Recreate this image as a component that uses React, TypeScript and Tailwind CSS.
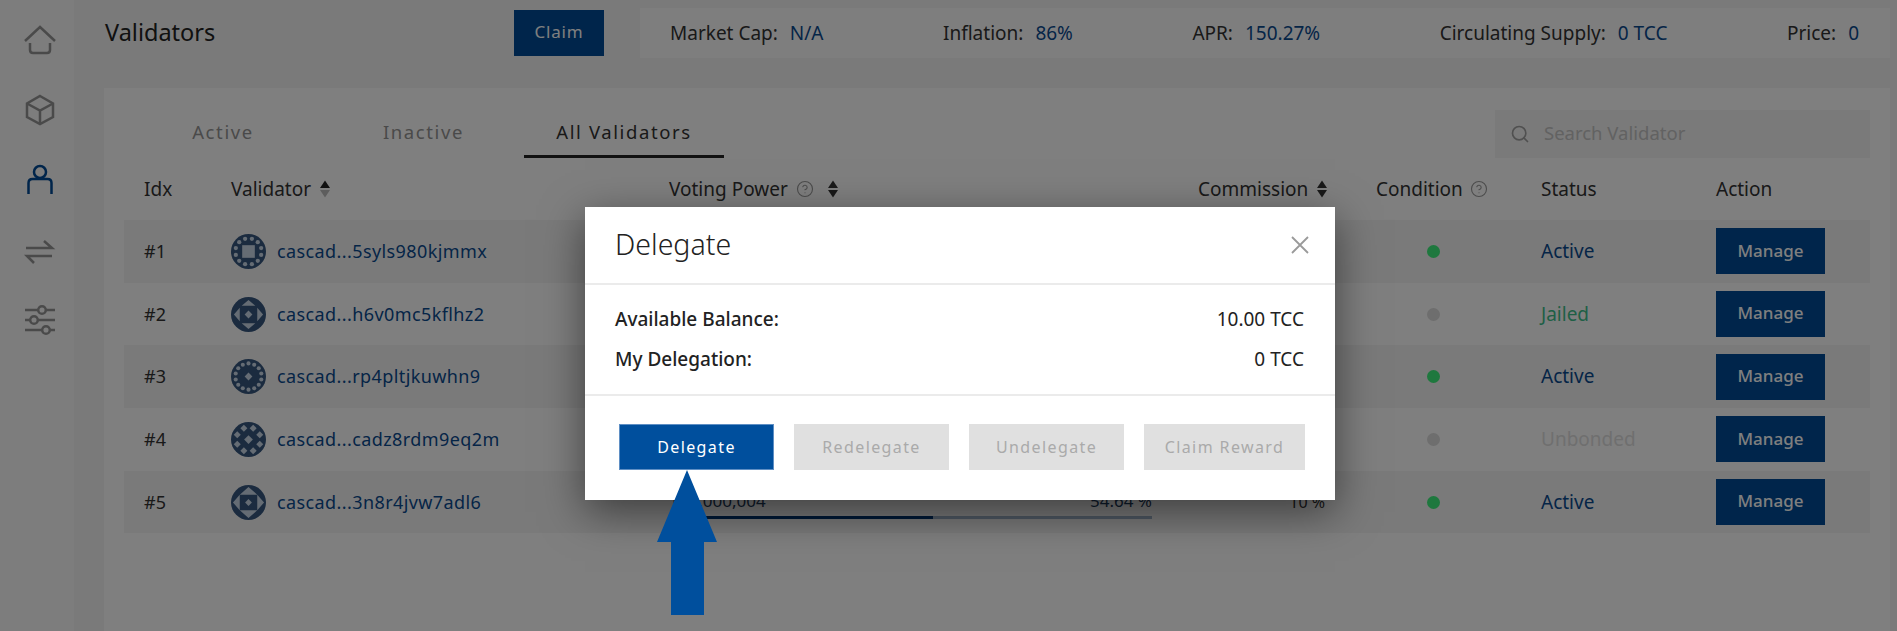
import React from "react";
import { CircleHelp, Search } from "lucide-react";

const FONT = "font-['Noto_Sans','Open_Sans',sans-serif]";

// only row 5's voting numbers peek out from under the modal
const validators = [
  { idx: "#1", name: "cascad...5syls980kjmmx", votes: "", pct: "", pctWidth: "w-[0%]", fee: "", online: true, status: "Active", avatar: 1 },
  { idx: "#2", name: "cascad...h6v0mc5kflhz2", votes: "", pct: "", pctWidth: "w-[0%]", fee: "", online: false, status: "Jailed", avatar: 2 },
  { idx: "#3", name: "cascad...rp4pltjkuwhn9", votes: "", pct: "", pctWidth: "w-[0%]", fee: "", online: true, status: "Active", avatar: 3 },
  { idx: "#4", name: "cascad...cadz8rdm9eq2m", votes: "", pct: "", pctWidth: "w-[0%]", fee: "", online: false, status: "Unbonded", avatar: 4 },
  { idx: "#5", name: "cascad...3n8r4jvw7adl6", votes: "100,000,004", pct: "54.64 %", pctWidth: "w-[54.64%]", fee: "10 %", online: true, status: "Active", avatar: 5 },
];

const stats = [
  { label: "Market Cap:", value: "N/A" },
  { label: "Inflation:", value: "86%" },
  { label: "APR:", value: "150.27%" },
  { label: "Circulating Supply:", value: "0 TCC" },
  { label: "Price:", value: "0" },
];

const COLS = "grid grid-cols-[87px_438px_483px_224px_165px_175px_1fr] items-center pl-[20px]";

const ring = (n: number, r: number) =>
  Array.from({ length: n }, (_, i) => {
    const a = (i / n) * Math.PI * 2 + Math.PI / n;
    return [18 + r * Math.cos(a), 18 + r * Math.sin(a)];
  });

const Diamond = ({ x, y, s }: { x: number; y: number; s: number }) => (
  <path d={`M${x} ${y - s}L${x + s} ${y}L${x} ${y + s}L${x - s} ${y}Z`} fill="#cbd9e8" />
);

const Avatar = ({ kind }: { kind: number }) => {
  return (
    <svg viewBox="0 0 36 36" className="h-[35px] w-[35px] shrink-0">
      <circle cx="18" cy="18" r="18" fill="#36577f" />
      {kind === 1 && (
        <>
          {ring(12, 13.5).map(([x, y], i) => (
            <circle key={i} cx={x} cy={y} r="2.2" fill="#cbd9e8" />
          ))}
          <rect x="11.5" y="11.5" width="13" height="13" fill="#cbd9e8" />
        </>
      )}
      {kind === 2 && (
        <>
          <path d="M18 3L25 9H11Z M18 33L25 27H11Z M3 18L9 11V25Z M33 18L27 11V25Z" fill="#cbd9e8" />
          <Diamond x={18} y={18} s={4} />
        </>
      )}
      {kind === 3 && (
        <>
          {ring(14, 13.5).map(([x, y], i) => (
            <circle key={i} cx={x} cy={y} r="2.1" fill="#cbd9e8" />
          ))}
          <Diamond x={18} y={18} s={4} />
        </>
      )}
      {kind === 4 && (
        <>
          {ring(8, 12.5).map(([x, y], i) => (
            <Diamond key={i} x={x} y={y} s={3.6} />
          ))}
          <Diamond x={18} y={18} s={4.5} />
        </>
      )}
      {kind === 5 && (
        <>
          <path d="M18 2L27 10H9Z M18 34L27 26H9Z M2 18L9 10V26Z M34 18L27 10V26Z" fill="#cbd9e8" />
          <Diamond x={18} y={18} s={3.5} />
        </>
      )}
    </svg>
  );
};

const SortIcon = ({ up, down }: { up: string; down: string }) => (
  <svg viewBox="0 0 10 20" preserveAspectRatio="none" className="h-[18px] w-[10px]">
    <path d="M5 0.5L10 9H0Z" fill={up} />
    <path d="M5 19.5L10 11H0Z" fill={down} />
  </svg>
);

const Sidebar = () => (
  <svg viewBox="0 0 74 631" className="h-full w-[74px]" fill="none" strokeWidth="2.5">
    <g stroke="#959595">
      <path d="M25 41L40 27L55 41" />
      <path d="M30 43V50Q30 53 33 53H47Q50 53 50 50V43" />
      <path d="M40 96L53 103.500V117L40 124L27 117V103.500Z" />
      <path d="M27 103.500L40 110.500L53 103.500M40 110.500V124" />
      <path d="M26 248H52L44 241" />
      <path d="M52 256H27L34 263" />
      <path d="M25 310H55M25 320H55M25 330H55" />
      <circle cx="42" cy="310" r="3.800" fill="#fafafa" />
      <circle cx="34" cy="320" r="3.800" fill="#fafafa" />
      <circle cx="46" cy="330" r="3.800" fill="#fafafa" />
    </g>
    <g stroke="#004a96">
      <circle cx="40" cy="172" r="6" />
      <path d="M28.500 194V183Q28.500 179 32.500 179H47.500Q51.500 179 51.500 183V194" />
    </g>
  </svg>
);

const Row = ({ v, shaded }: { v: (typeof validators)[number]; shaded: boolean }) => (
  <div className={`${COLS} h-[62.7px] text-[18px] text-[#333] ${shaded ? "bg-[#f5f5f5]" : ""}`}>
    <div>{v.idx}</div>
    <div className="flex items-center gap-[11px] text-[#0a4a8f]">
      <Avatar kind={v.avatar} />
      <span className="tracking-[0.4px]">{v.name}</span>
    </div>
    <div className="mt-[4px]">
      {v.votes && (
        <>
          <div className="flex h-[24px] items-center justify-between text-[17px] text-[#1d3a5a]">
            <span>{v.votes}</span>
            <span>{v.pct}</span>
          </div>
          <div className="mt-[3px] h-[3px] w-full bg-[#9fb3c8]">
            <div className={`h-full bg-[#00346e] ${v.pctWidth}`} />
          </div>
        </>
      )}
    </div>
    <div className="pr-[51px] text-right text-[16px]">{v.fee}</div>
    <div className="pl-[51px]">
      <div className={`h-[13px] w-[13px] rounded-full ${v.online ? "bg-[#3df07c]" : "bg-[#dcdcdc]"}`} />
    </div>
    <div
      className={`text-[19px] ${
        v.status === "Active" ? "text-[#0a4a8f]" : v.status === "Jailed" ? "text-[#3fc08c]" : "text-[#dedede]"
      }`}
    >
      {v.status}
    </div>
    <button className="h-[46px] w-[109px] bg-[#004a96] pb-[2px] text-[17px] font-medium text-white">Manage</button>
  </div>
);

const ModalButton = ({ label, active, wide }: { label: string; active?: boolean; wide?: boolean }) => (
  <button
    className={`h-[46px] text-[16px] tracking-[1.4px] ${wide ? "w-[161px]" : "w-[155px]"} ${
      active ? "border border-[#5f8fc4] bg-[#004f9d] text-white" : "bg-[#e0e0e0] text-[#aaaaaa]"
    }`}
  >
    {label}
  </button>
);

export default function App() {
  return (
    <div className={`relative flex h-[631px] w-[1897px] overflow-hidden bg-[#f5f5f5] ${FONT}`}>
      <aside className="h-full w-[74px] shrink-0 bg-[#fafafa]">
        <Sidebar />
      </aside>

      <main className="min-w-0 flex-1 pr-[7px]">
        <header className="flex h-[88px] items-start pt-[8px]">
          <h1 className="mt-[6px] w-[440px] pl-[31px] text-[23.500px] leading-[36px] text-[#222]">Validators</h1>
          <button className="mt-[2px] h-[46px] w-[90px] bg-[#004a96] pb-[2px] text-[17px] tracking-[0.8px] text-white">
            Claim
          </button>
          <div className="ml-[36px] flex h-[50px] flex-1 items-center justify-between bg-[#fdfdfd] pl-[30px] pr-[31px] text-[19px]">
            {stats.map((s) => (
              <div key={s.label} className="flex gap-[12px] text-[#333]">
                <span>{s.label}</span>
                <span className="text-[#0a4a8f]">{s.value}</span>
              </div>
            ))}
          </div>
        </header>

        <section className="ml-[30px] h-[543px] bg-white pl-[20px] pr-[20px]">
          <div className="flex h-[70px] items-end justify-between">
            <nav className="ml-[-1px] flex text-[18.500px] tracking-[1.6px]">
              <div className="flex h-[48px] w-[200px] items-center justify-center pb-[4px] text-[#949494]">Active</div>
              <div className="flex h-[48px] w-[201px] items-center justify-center pb-[4px] text-[#949494]">Inactive</div>
              <div className="flex h-[48px] w-[200px] items-center justify-center border-b-[3px] border-[#222] pb-[1px] text-[#333]">
                All Validators
              </div>
            </nav>
            <div className="flex h-[48px] w-[375px] items-center gap-[14px] bg-[#f5f5f5] pb-[3px] pl-[15px] text-[18.500px] text-[#c4c4c4]">
              <Search size={20} strokeWidth={2} className="mt-[2px] text-[#a0a0a0]" />
              <span>Search Validator</span>
            </div>
          </div>

          <div className={`${COLS} h-[62px] text-[19px] text-[#333]`}>
            <div>Idx</div>
            <div className="flex items-center gap-[9px]">
              Validator <SortIcon up="#222" down="#bbbbbb" />
            </div>
            <div className="flex items-center gap-[8px]">
              Voting Power <CircleHelp size={18} strokeWidth={1.5} className="text-[#999]" />
              <span className="ml-[6px]">
                <SortIcon up="#333" down="#333" />
              </span>
            </div>
            <div className="flex items-center gap-[9px] pl-[46px]">
              Commission <SortIcon up="#333" down="#333" />
            </div>
            <div className="flex items-center gap-[7px]">
              Condition <CircleHelp size={18} strokeWidth={1.5} className="text-[#999]" />
            </div>
            <div>Status</div>
            <div>Action</div>
          </div>

          {validators.map((v, i) => (
            <Row key={v.idx} v={v} shaded={i % 2 === 0} />
          ))}
        </section>
      </main>

      {/* backdrop + modal sit over the whole page */}
      <div className="absolute inset-0 bg-black/50" />
      <div className="absolute left-[585px] top-[207px] w-[750px] bg-white shadow-[0_12px_40px_rgba(0,0,0,0.5)]">
        <div className="flex h-[78px] items-center justify-between border-b-2 border-[#ebebeb] pl-[30px] pr-[26px]">
          <h2 className="pb-[2px] text-[28.500px] font-light text-[#222]">Delegate</h2>
          <svg viewBox="0 0 18 18" className="h-[18px] w-[18px]" fill="none" stroke="#9a9a9a" strokeWidth="1.8">
            <path d="M1 1L17 17M17 1L1 17" />
          </svg>
        </div>
        <div className="flex h-[111px] flex-col justify-center gap-[16px] border-b-2 border-[#ebebeb] pl-[30px] pr-[31px] text-[19px] text-[#222]">
          <div className="flex h-[24px] items-center justify-between">
            <span className="font-medium">Available Balance:</span>
            <span>10.00 TCC</span>
          </div>
          <div className="flex h-[24px] items-center justify-between">
            <span className="font-medium">My Delegation:</span>
            <span>0 TCC</span>
          </div>
        </div>
        <div className="flex h-[104px] items-start gap-[20px] pl-[34px] pt-[28px]">
          <ModalButton label="Delegate" active />
          <ModalButton label="Redelegate" />
          <ModalButton label="Undelegate" />
          <ModalButton label="Claim Reward" wide />
        </div>
      </div>

      {/* annotation arrow drawn on the screenshot */}
      <svg className="absolute left-[656px] top-[470px] h-[146px] w-[62px]" viewBox="0 0 62 146">
        <path d="M31 0L61 72H48V145H15V72H1Z" fill="#004f9d" />
      </svg>
    </div>
  );
}
